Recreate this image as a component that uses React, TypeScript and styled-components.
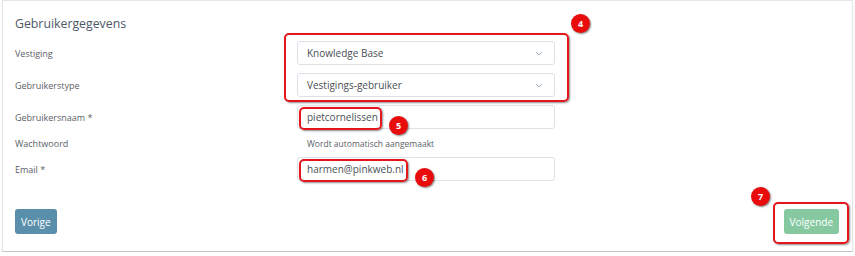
import React from 'react'
import styled, { createGlobalStyle } from 'styled-components'

const GlobalStyle = createGlobalStyle`
  body {
    margin : 0;
    padding : 0 2px;
    background : #ffffff;
    font-family : "Open Sans", "Liberation Sans", sans-serif;
  }
`

const Card = styled.div`
  position : relative;
  height : 252px;
  box-sizing : border-box;
  background : #ffffff;
  border : 1px solid #e6e6e6;
  border-bottom-color : #c4c4c4;
  box-shadow : 0 1px 1px rgba(0, 0, 0, 0.12);
  padding : 14px 12px 0 12px;
`

const Title = styled.h2`
  margin : 0 0 8px 0;
  font-size : 12.3px;
  line-height : 18px;
  font-weight : 400;
  color : #4b5866;
`

const Form = styled.div`
  display : flex;
  flex-direction : column;
  gap : 8px;
`

const Row = styled.div<{ $h: number }>`
  display : grid;
  grid-template-columns : 282px 258px;
  align-items : center;
  height : ${(p) => p.$h}px;
`

const Label = styled.label`
  font-size : 9px;
  color : #5b6168;
`

const Field = styled.div`
  display : flex;
  align-items : center;
  justify-content : space-between;
  box-sizing : border-box;
  height : 24px;
  padding : 0 11px 0 9px;
  border : 1px solid #dbe2e8;
  border-radius : 3px;
  font-size : 10px;
  color : #4a4f55;
  background : #fff;
`

const Hint = styled.span`
  padding-left : 10px;
  font-size : 8.5px;
  color : #5b6168;
`

const Footer = styled.div`
  display : flex;
  justify-content : space-between;
  align-items : center;
  margin-top : 28px;
  padding-right : 1px;
`

const Button = styled.button<{ $bg: string }>`
  height : 25px;
  padding : 0 6px;
  border : none;
  border-radius : 3px;
  background : ${(p) => p.$bg};
  color : #ffffff;
  font-family : inherit;
  font-size : 10px;
  cursor : pointer;
`

const Mark = styled.div`
  position : absolute;
  box-sizing : border-box;
  border : 2px solid #e3161b;
  border-radius : 5px;
  box-shadow : 1px 1px 2px rgba(0, 0, 0, 0.45), inset 0 0 0 1px rgba(255, 255, 255, 0.6);
  pointer-events : none;
`

const Badge = styled.div`
  position : absolute;
  width : 19px;
  height : 19px;
  border-radius : 50%;
  background : #e80c0c;
  box-shadow : 1px 1px 2px rgba(0, 0, 0, 0.5);
  color : #fff;
  font-size : 9px;
  font-weight : 700;
  display : flex;
  align-items : center;
  justify-content : center;
`

const Chevron = () => (
  <svg width="8" height="5" viewBox="0 0 8 5">
    <path d="M1 1l3 3 3-3" fill="none" stroke="#a4b3c2" strokeWidth="1" />
  </svg>
)

const App = () => {
  return (
    <>
      <GlobalStyle />
      <Card>
        <Title>Gebruikergegevens</Title>
        <Form>
          <Row $h={24}>
            <Label>Vestiging</Label>
            <Field>Knowledge Base<Chevron /></Field>
          </Row>
          <Row $h={24}>
            <Label>Gebruikerstype</Label>
            <Field>Vestigings-gebruiker<Chevron /></Field>
          </Row>
          <Row $h={24}>
            <Label>Gebruikersnaam *</Label>
            <Field>pietcornelissen</Field>
          </Row>
          <Row $h={12}>
            <Label>Wachtwoord</Label>
            <Hint>Wordt automatisch aangemaakt</Hint>
          </Row>
          <Row $h={24}>
            <Label>Email *</Label>
            <Field>harmen@pinkweb.nl</Field>
          </Row>
        </Form>
        <Footer>
          <Button $bg="#5a8fab">Vorige</Button>
          <Button $bg="#86c9a1">Volgende</Button>
        </Footer>

        <Mark style={{ left: 281, top: 32, width: 285, height: 69 }} />
        <Badge style={{ left: 568, top: 13 }}>4</Badge>
        <Mark style={{ left: 296, top: 106, width: 83, height: 23 }} />
        <Badge style={{ left: 386, top: 115 }}>5</Badge>
        <Mark style={{ left: 296, top: 158, width: 109, height: 23 }} />
        <Badge style={{ left: 412, top: 167 }}>6</Badge>
        <Mark style={{ left: 770, top: 201, width: 76, height: 42 }} />
        <Badge style={{ left: 748, top: 186 }}>7</Badge>
      </Card>
    </>
  )
}

export default App
